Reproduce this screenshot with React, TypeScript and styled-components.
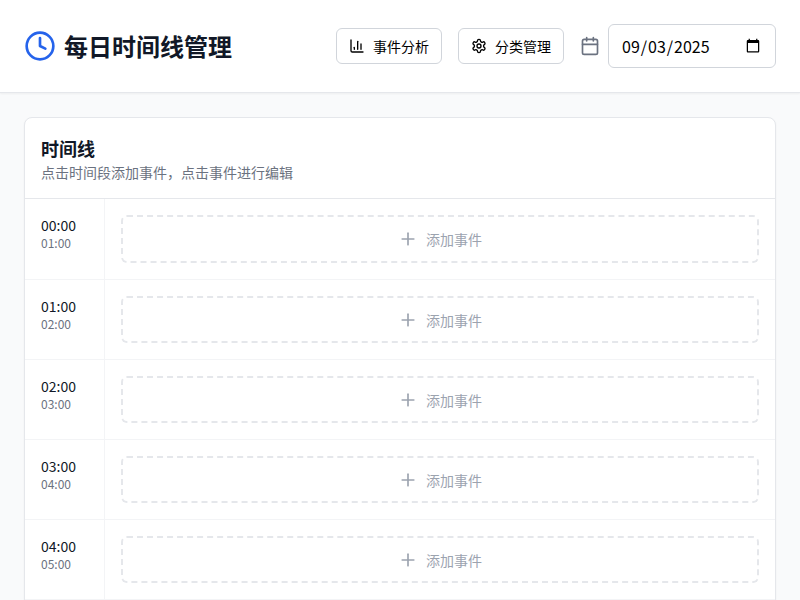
import React, { useState } from "react";
import styled, { createGlobalStyle } from "styled-components";
import { Calendar, ChartColumn, Clock, Plus } from "lucide-react";

const GlobalStyle = createGlobalStyle`
  *, *::before, *::after {
    box-sizing: border-box;
  }
  body {
    margin: 0;
    background: #f9fafb;
    color: #000;
    font-family: "Noto Sans CJK SC", sans-serif;
    font-size: 16px;
    line-height: 24px;
  }
  h1, h2, p {
    margin: 0;
  }
  button, input {
    font-family: inherit;
    color: inherit;
    margin: 0;
  }
`;

const Page = styled.div`
  min-height: 100vh;
`;

const Header = styled.header`
  display: flex;
  align-items: center;
  justify-content: space-between;
  padding: 24px;
  background: #fff;
  border-bottom: 1px solid #e5e7eb;
  box-shadow: 0 1px 2px rgba(0, 0, 0, 0.05);
`;

const Brand = styled.div`
  display: flex;
  align-items: center;
  gap: 8px;
  color: #2563eb;
`;

const Title = styled.h1`
  font-size: 24px;
  line-height: 32px;
  font-weight: 700;
  color: #111827;
`;

const Actions = styled.div`
  display: flex;
  align-items: center;
  gap: 16px;
`;

const ActionButton = styled.button`
  display: inline-flex;
  align-items: center;
  justify-content: center;
  gap: 8px;
  height: 36px;
  padding: 0 12px;
  border: 1px solid #d1d5db;
  border-radius: 6px;
  background: #fff;
  font-size: 14px;
  line-height: 20px;
  white-space: nowrap;
  cursor: pointer;

  &:hover {
    background: #f9fafb;
  }
`;

const GearSvg = styled.svg`
  width: 16px;
  height: 16px;
  fill: none;
  stroke: currentColor;
  stroke-width: 2;
  stroke-linecap: round;
  stroke-linejoin: round;
`;

const DateField = styled.label`
  display: flex;
  align-items: center;
  gap: 8px;
  color: #6b7280;
`;

const DateInput = styled.input`
  width: 168px;
  height: 44px;
  padding: 8px 12px;
  border: 1px solid #d1d5db;
  border-radius: 6px;
  background: #fff;
  color: #000;
  font-size: 16px;
  line-height: 24px;
`;

const Main = styled.main`
  padding: 24px;
`;

const Card = styled.section`
  background: #fff;
  border: 1px solid #e5e7eb;
  border-radius: 8px;
  box-shadow: 0 1px 2px rgba(0, 0, 0, 0.05);
`;

const CardHeader = styled.div`
  padding: 16px;
  border-bottom: 1px solid #e5e7eb;
`;

const CardTitle = styled.h2`
  font-size: 18px;
  line-height: 28px;
  font-weight: 600;
  color: #111827;
`;

const CardHint = styled.p`
  font-size: 14px;
  line-height: 20px;
  color: #6b7280;
`;

const SlotRow = styled.div`
  display: flex;
  min-height: 80px;

  & + & {
    border-top: 1px solid #f3f4f6;
  }
`;

const TimeCell = styled.div`
  flex: none;
  width: 80px;
  padding: 16px;
  border-right: 1px solid #f3f4f6;
`;

const StartTime = styled.div`
  font-size: 14px;
  line-height: 20px;
  color: #111827;
`;

const EndTime = styled.div`
  font-size: 12px;
  line-height: 16px;
  color: #6b7280;
`;

const EventCell = styled.div`
  flex: 1;
  display: flex;
  padding: 16px;
`;

const AddButton = styled.button`
  flex: 1;
  display: flex;
  align-items: center;
  justify-content: center;
  gap: 8px;
  padding: 0;
  border: 2px dashed #e5e7eb;
  border-radius: 6px;
  background: transparent;
  color: #9ca3af;
  font-size: 14px;
  line-height: 20px;
  cursor: pointer;

  &:hover {
    border-color: #93c5fd;
    color: #3b82f6;
  }
`;

const formatHour = (hour: number) => `${String(hour).padStart(2, "0")}:00`;

const hours = Array.from({ length: 24 }, (_, hour) => hour);

function GearIcon() {
  return (
    <GearSvg viewBox="0 0 24 24" aria-hidden>
      <path d="M12.22 2h-.44a2 2 0 0 0-2 2v.18a2 2 0 0 1-1 1.73l-.43.25a2 2 0 0 1-2 0l-.15-.08a2 2 0 0 0-2.73.73l-.22.38a2 2 0 0 0 .73 2.73l.15.1a2 2 0 0 1 1 1.72v.51a2 2 0 0 1-1 1.74l-.15.09a2 2 0 0 0-.73 2.73l.22.38a2 2 0 0 0 2.73.73l.15-.08a2 2 0 0 1 2 0l.43.25a2 2 0 0 1 1 1.73V20a2 2 0 0 0 2 2h.44a2 2 0 0 0 2-2v-.18a2 2 0 0 1 1-1.73l.43-.25a2 2 0 0 1 2 0l.15.08a2 2 0 0 0 2.73-.73l.22-.39a2 2 0 0 0-.73-2.73l-.15-.08a2 2 0 0 1-1-1.74v-.5a2 2 0 0 1 1-1.74l.15-.09a2 2 0 0 0 .73-2.73l-.22-.38a2 2 0 0 0-2.73-.73l-.15.08a2 2 0 0 1-2 0l-.43-.25a2 2 0 0 1-1-1.73V4a2 2 0 0 0-2-2z" />
      <circle cx="12" cy="12" r="3" />
    </GearSvg>
  );
}

function TimeSlot({ hour }: { hour: number }) {
  return (
    <SlotRow>
      <TimeCell>
        <StartTime>{formatHour(hour)}</StartTime>
        <EndTime>{formatHour(hour + 1)}</EndTime>
      </TimeCell>
      <EventCell>
        <AddButton type="button">
          <Plus size={20} aria-hidden />
          <span>添加事件</span>
        </AddButton>
      </EventCell>
    </SlotRow>
  );
}

export default function App() {
  const [date, setDate] = useState("2025-09-03");

  return (
    <Page>
      <GlobalStyle />
      <Header>
        <Brand>
          <Clock size={32} aria-hidden />
          <Title>每日时间线管理</Title>
        </Brand>
        <Actions>
          <ActionButton type="button">
            <ChartColumn size={16} aria-hidden />
            <span>事件分析</span>
          </ActionButton>
          <ActionButton type="button">
            <GearIcon />
            <span>分类管理</span>
          </ActionButton>
          <DateField>
            <Calendar size={20} aria-hidden />
            <DateInput
              type="date"
              aria-label="日期"
              value={date}
              onChange={(event) => setDate(event.target.value)}
            />
          </DateField>
        </Actions>
      </Header>
      <Main>
        <Card>
          <CardHeader>
            <CardTitle>时间线</CardTitle>
            <CardHint>点击时间段添加事件，点击事件进行编辑</CardHint>
          </CardHeader>
          {hours.map((hour) => (
            <TimeSlot key={hour} hour={hour} />
          ))}
        </Card>
      </Main>
    </Page>
  );
}
